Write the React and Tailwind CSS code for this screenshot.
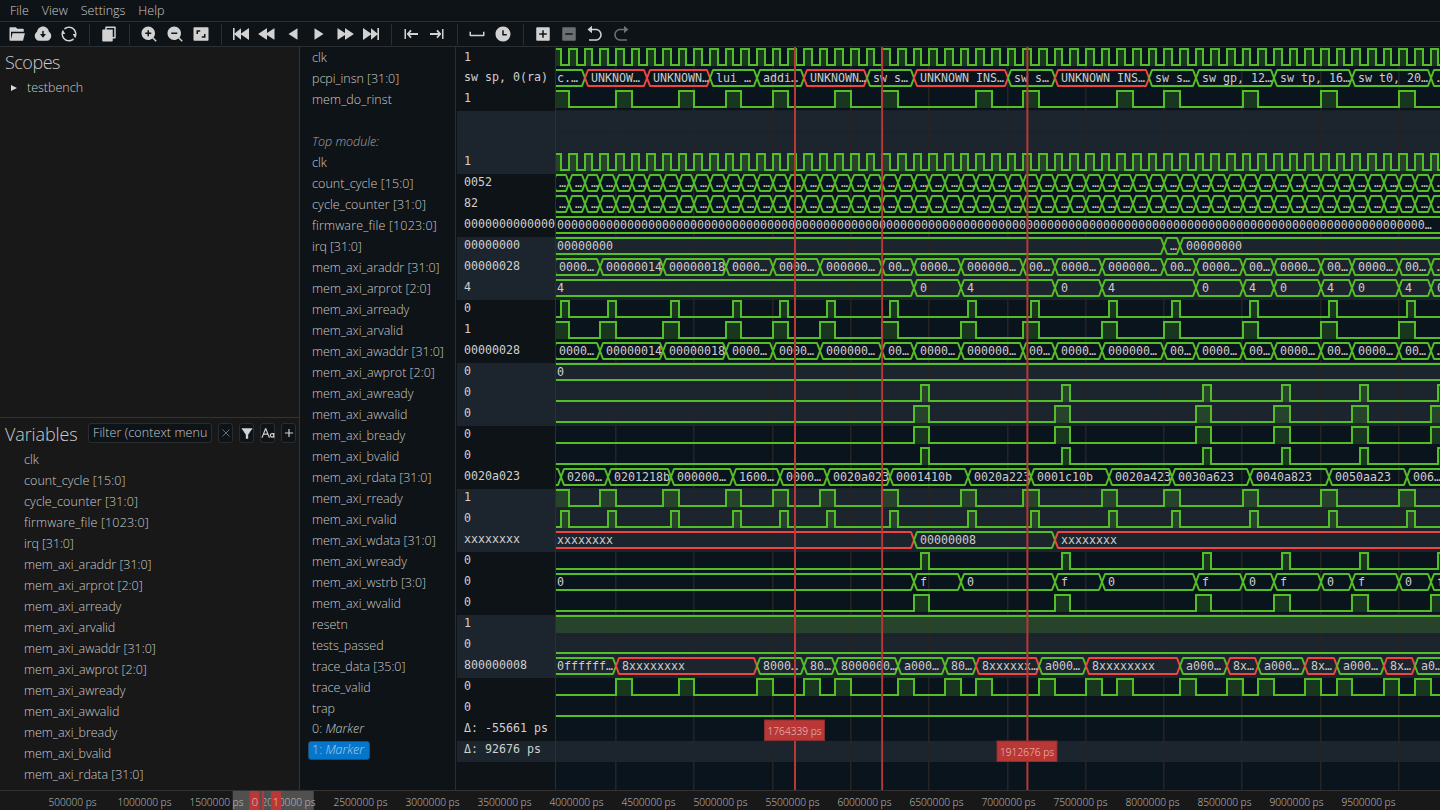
import React from "react";
import {
  RiFolderOpenFill, RiDownloadCloudFill, RiRefreshLine, RiFileCopyFill, RiZoomInFill, RiZoomOutFill,
  RiAspectRatioFill, RiTimeFill, RiAddBoxFill, RiCheckboxIndeterminateFill, RiArrowGoBackFill,
  RiArrowGoForwardFill, RiFilterFill, RiFontSize, RiAddFill, RiSpeedFill, RiRewindFill, RiSpace,
} from "react-icons/ri";

const ROW = 21;
const TOP = 48;
const LEFT = 556;
const RIGHT = 1440;
const GREEN = "#54be27";
const RED = "#f04540";

// clock cycle index -> horizontal position
const tx = (k) => Math.round(569 + 15.665 * k);

const spans = (starts, off = 0, len = 1) => starts.map((s) => [s + off, s + off + len]);
const READS = [-1, 2, 6, 10, 13, 16, 20, 25, 29, 34, 38, 43, 48, 53];
const WRITES = [22, 31, 40, 45, 50, 55];
const arValid = spans(READS);
const arReady = spans(READS, 0.5, 0.5);
const awValid = spans(WRITES);
const awReady = spans(WRITES, 0.5, 0.5);
const clock = Array.from({ length: 58 }, (_, i) => [i - 1, i - 0.5]);
const counter = Array.from({ length: 57 }, (_, i) => [i - 1, "…"]);
const addr = [
  [-1, "0000…"], [2, "00000014"], [6, "00000018"], [10, "0000…"], [13, "0000…"], [16, "000000…"], [20, "00…"],
  [22, "0000…"], [25, "000000…"], [29, "00…"], [31, "0000…"], [34, "000000…"], [38, "00…"], [40, "0000…"],
  [43, "00…"], [45, "0000…"], [48, "00…"], [50, "0000…"], [53, "00…"], [55, "…"],
];

const SIGNALS = [
  { name: "clk", value: "1", bits: clock },
  {
    name: "pcpi_insn [31:0]", value: "sw sp, 0(ra)",
    bus: [[-9, "c.…"], [1, "UNKNOW…", 1], [5, "UNKNOWN…", 1], [9, "lui …"], [12, "addi…"], [15, "UNKNOWN…", 1],
      [19, "sw s…"], [22, "UNKNOWN INS…", 1], [28, "sw s…"], [31, "UNKNOWN INS…", 1], [37, "sw s…"],
      [40, "sw gp, 12…"], [45, "sw tp, 16…"], [50, "sw t0, 20…"], [55, "…"]],
  },
  { name: "mem_do_rinst", value: "1", bits: spans([-1, 3, 7, 10, 13, 17, 20, 26, 29, 35, 38, 43, 48, 53]) },
  { name: "", value: "" },
  { name: "Top module:", value: "", italic: true },
  { name: "clk", value: "1", bits: clock },
  { name: "count_cycle [15:0]", value: "0052", bus: counter },
  { name: "cycle_counter [31:0]", value: "82", bus: counter },
  { name: "firmware_file [1023:0]", value: "0000000000000", bus: [[-9, "0".repeat(124) + "…"]] },
  { name: "irq [31:0]", value: "00000000", bus: [[-9, "00000000"], [38, "…"], [39, "00000000"]] },
  { name: "mem_axi_araddr [31:0]", value: "00000028", bus: addr },
  {
    name: "mem_axi_arprot [2:0]", value: "4",
    bus: [[-9, "4"], [22, "0"], [25, "4"], [31, "0"], [34, "4"], [40, "0"], [43, "4"], [45, "0"], [48, "4"], [50, "0"], [53, "4"], [55, "0"]],
  },
  { name: "mem_axi_arready", value: "0", bits: arReady },
  { name: "mem_axi_arvalid", value: "1", bits: arValid },
  { name: "mem_axi_awaddr [31:0]", value: "00000028", bus: addr },
  { name: "mem_axi_awprot [2:0]", value: "0", bus: [[-9, "0"]] },
  { name: "mem_axi_awready", value: "0", bits: awReady },
  { name: "mem_axi_awvalid", value: "0", bits: awValid },
  { name: "mem_axi_bready", value: "0", bits: awValid },
  { name: "mem_axi_bvalid", value: "0", bits: awReady },
  {
    name: "mem_axi_rdata [31:0]", value: "0020a023",
    bus: [[-9, ""], [-0.5, "0200…"], [2.5, "0201218b"], [6.5, "000000…"], [10.5, "1600…"], [13.5, "0000…"],
      [16.5, "0020a023"], [20.5, "0001410b"], [25.5, "0020a223"], [29.5, "0001c10b"], [34.5, "0020a423"],
      [38.5, "0030a623"], [43.5, "0040a823"], [48.5, "0050aa23"], [53.5, "006…"]],
  },
  { name: "mem_axi_rready", value: "1", bits: arValid },
  { name: "mem_axi_rvalid", value: "0", bits: arReady },
  { name: "mem_axi_wdata [31:0]", value: "xxxxxxxx", bus: [[-9, "xxxxxxxx", 1], [22, "00000008"], [31, "xxxxxxxx", 1]] },
  { name: "mem_axi_wready", value: "0", bits: awReady },
  {
    name: "mem_axi_wstrb [3:0]", value: "0",
    bus: [[-9, "0"], [22, "f"], [25, "0"], [31, "f"], [34, "0"], [40, "f"], [43, "0"], [45, "f"], [48, "0"], [50, "f"], [53, "0"], [55, "f"]],
  },
  { name: "mem_axi_wvalid", value: "0", bits: awValid },
  { name: "resetn", value: "1", bits: [[-9, 99]] },
  { name: "tests_passed", value: "0", bits: [] },
  {
    name: "trace_data [35:0]", value: "800000008",
    bus: [[-9, "0ffffff…"], [3, "8xxxxxxxx", 1], [12, "8000…"], [15, "80…"], [17, "8000000…"], [21, "a000…"],
      [24, "80…"], [26, "8xxxxxx…", 1], [30, "a000…"], [33, "8xxxxxxxx", 1], [39, "a000…"], [42, "8x…", 1],
      [44, "a000…"], [47, "8x…", 1], [49, "a000…"], [52, "8x…", 1], [54, "a0…"]],
  },
  { name: "trace_valid", value: "0", bits: spans([3, 7, 12, 15, 17, 21, 24, 26, 30, 33, 35, 39, 42, 44, 47, 49, 52, 54]) },
  { name: "trap", value: "0", bits: [] },
];

// names whose letters sit wider apart than the default
const TRACKING = {
  "firmware_file [1023:0]": "tracking-[0.17px]",
  "count_cycle [15:0]": "tracking-[0.07px]",
  "cycle_counter [31:0]": "tracking-[0.1px]",
  "mem_do_rinst": "tracking-[0.07px]",
  "irq [31:0]": "tracking-[-0.1px]",
  "mem_axi_arprot [2:0]": "tracking-[0px]",
  "mem_axi_awprot [2:0]": "tracking-[0px]",
};
const trackingOf = (name) => TRACKING[name] || "tracking-[-0.04px]";

const banded = (i) => Math.floor(i / 3) % 2 === 1;

const MONO = "font-['DejaVu_Sans_Mono',monospace]";

function Bits({ y, data }) {
  let d = `M${LEFT - 4} ${y + 17}`;
  data.forEach(([a, b]) => {
    const x1 = Math.max(tx(a), LEFT - 3);
    const x2 = Math.min(tx(b), RIGHT + 4);
    d += `H${x1}V${y + 1}H${x2}V${y + 17}`;
  });
  d += `H${RIGHT + 5}`;
  const always = data.length === 1 && data[0][0] === -9;
  return (
    <g>
      {data.map(([a, b], i) => {
        const x1 = Math.max(tx(a), LEFT);
        const x2 = Math.min(tx(b), RIGHT);
        return x2 > x1 ? <rect key={i} x={x1} y={y + 2} width={x2 - x1} height={16} fill={GREEN} opacity="0.2" /> : null;
      })}
      <path d={always ? `M${LEFT} ${y + 1}H${RIGHT}` : d} fill="none" stroke={GREEN} strokeWidth="2" />
    </g>
  );
}

function Bus({ y, data }) {
  return (
    <g>
      {data.map(([k, , red], i) => {
        const a = Math.max(tx(k), LEFT - 8);
        const b = i + 1 < data.length ? tx(data[i + 1][0]) : RIGHT + 12;
        return (
          <path
            key={i}
            d={`M${a} ${y + 9}L${a + 3} ${y + 1}H${b - 3}L${b} ${y + 9}L${b - 3} ${y + 17}H${a + 3}Z`}
            fill="none"
            stroke={red ? RED : GREEN}
            strokeWidth="2"
            strokeLinejoin="bevel"
          />
        );
      })}
      {data.map(([k, label], i) => (
        <text
          key={i}
          x={k === -9 ? LEFT + 1 : tx(k) + 6}
          y={y + 13}
          fill="#cdcdcd"
          className={MONO + " text-[11.63px] whitespace-pre"}
        >
          {label}
        </text>
      ))}
    </g>
  );
}

function Waves() {
  const grid = Array.from({ length: 11 }, (_, i) => 616 + 78.3 * i);
  return (
    <svg className="block h-[743px] w-[884px] shrink-0" viewBox="556 47 884 743">
      <rect x="556" y="47" width="884" height="743" fill="#0a141c" />
      {SIGNALS.map((_, i) => banded(i) && (
        <rect key={i} x="556" y={TOP + ROW * i} width="884" height={ROW} fill="#1c252d" />
      ))}
      <rect x="556" y={TOP + ROW * 33} width="884" height={ROW} fill="#1c252d" />
      {SIGNALS.map((_, i) => banded(i) && (
        <rect key={i} x="556" y={TOP + ROW * i - 1} width="884" height="1" fill="#182129" />
      ))}
      {grid.map((x) => <rect key={x} x={Math.round(x) - 1} y="47" width="1.6" height="743" fill="#252423" />)}
      {SIGNALS.map((s, i) => {
        const y = TOP + ROW * i;
        if (s.bits) return <Bits key={i} y={y} data={s.bits} />;
        if (s.bus) return <Bus key={i} y={y} data={s.bus} />;
        return null;
      })}
      <g fill="#b93835">
        <rect x="794" y="47" width="2" height="743" />
        <rect x="881.2" y="47" width="1.9" height="743" />
        <rect x="1026.4" y="47" width="2" height="743" />
      </g>
      {[[764, 719.5, "1764339 ps"], [996.5, 740.5, "1912676 ps"]].map(([x, y, t]) => (
        <g key={t}>
          <rect x={x + 0.5} y={y + 0.5} width="60" height="20.5" fill="#b93835" stroke="#8c2f30" />
          <text x={x + 3.5} y={y + 15} fill="#ecc8c6" textLength="54" lengthAdjust="spacingAndGlyphs"
            className="font-['Open_Sans',sans-serif] text-[11px]">{t}</text>
        </g>
      ))}
    </svg>
  );
}

function Names() {
  return (
    <div className="flex w-[156px] shrink-0 flex-col border-r border-[#2b2f32] bg-[#0e1317] pl-3">
      {SIGNALS.map((s, i) => (
        <div key={i} className={"h-[21px] shrink-0 leading-[21px] whitespace-nowrap " + trackingOf(s.name) + (s.italic ? " italic text-[#a6a6a6]" : "")}>
          {s.name}
        </div>
      ))}
      <div className="h-[21px] shrink-0 leading-[19px]">0: <i>Marker</i></div>
      <div className="-ml-[4px] mt-px h-[19px] w-[62px] shrink-0 rounded-[3px] border border-[#1d4f75] bg-[#0676cb] pl-[3px] leading-[15px] text-[#a9d0ee]">
        1: <i>Marker</i>
      </div>
    </div>
  );
}

function Values() {
  const items = [...SIGNALS.map((s) => s.value), "Δ: -55661 ps", "Δ: 92676 ps"];
  return (
    <div className={"flex w-[100px] shrink-0 flex-col overflow-hidden border-r border-[#2b2f32] bg-[#0e1317] pt-px pl-px text-[11.63px] text-[#d0d0d0] " + MONO}>
      {items.map((v, i) => (
        <div key={i} className={"h-[21px] shrink-0 pl-[7px] whitespace-pre " + (i ? "leading-[17px]" : "leading-[19px]") + ((i < 32 ? banded(i) : i === 33) ? " bg-[#1c252d]" : "")}>
          {v}
        </div>
      ))}
    </div>
  );
}

function Svg({ children }) {
  return <svg viewBox="0 0 18 18" className="size-[18px]" fill="currentColor">{children}</svg>;
}

const SkipBack = () => <Svg><path d="M1 3h1.6v5.6L9 3.2v5.4L17 3v12L9 9.400V14.800L2.600 9.400V15H1z" /></Svg>;
const SkipFwd = () => <Svg><path d="M17 3h-1.600v5.600L9 3.200v5.400L1 3v12L9 9.400V14.800L15.400 9.400V15H17z" /></Svg>;
const PlayRev = () => <Svg><path d="M13.500 3.200v11.600L4.500 9z" /></Svg>;
const Play = () => <Svg><path d="M4.500 3.200v11.600L13.500 9z" /></Svg>;
const Prev = () => (
  <Svg><path d="M2.500 4h1.500v10H2.500zM8.400 4.800l1.300 1.300L7.800 8.100H16v1.800H7.800l1.900 2L8.400 13.200 4.600 9z" /></Svg>
);
const Next = () => (
  <Svg><path d="M15.500 4h-1.500v10h1.500zM9.600 4.800 8.300 6.100l1.900 2H2v1.800h8.200l-1.900 2L9.600 13.200l3.800-4.200z" /></Svg>
);

const TOOLS = [
  RiFolderOpenFill, RiDownloadCloudFill, RiRefreshLine, null, RiFileCopyFill, null, RiZoomInFill, RiZoomOutFill,
  RiAspectRatioFill, null, SkipBack, RiRewindFill, PlayRev, Play, RiSpeedFill, SkipFwd, null, Prev, Next, null,
  RiSpace, RiTimeFill, null, RiAddBoxFill, [RiCheckboxIndeterminateFill], RiArrowGoBackFill, [RiArrowGoForwardFill],
];

function Toolbar() {
  return (
    <div className="flex h-[25px] shrink-0 items-center gap-2 border-b border-[#2b2f32] pl-2 text-[#d2d2d2]">
      {TOOLS.map((t, i) => {
        if (!t) return <div key={i} className="mx-[2.5px] h-[21px] w-px shrink-0 bg-[#2b2f32]" />;
        const off = Array.isArray(t);
        const Icon = off ? t[0] : t;
        return <span key={i} className={off ? "text-[#6d7072]" : ""}><Icon size={18} className="block size-[18px]" /></span>;
      })}
    </div>
  );
}

const VARIABLES = [
  "clk", "count_cycle [15:0]", "cycle_counter [31:0]", "firmware_file [1023:0]", "irq [31:0]", "mem_axi_araddr [31:0]",
  "mem_axi_arprot [2:0]", "mem_axi_arready", "mem_axi_arvalid", "mem_axi_awaddr [31:0]", "mem_axi_awprot [2:0]",
  "mem_axi_awready", "mem_axi_awvalid", "mem_axi_bready", "mem_axi_bvalid", "mem_axi_rdata [31:0]",
];

function SmallButton({ children }) {
  return (
    <div className="flex h-[20px] w-[15px] shrink-0 items-center justify-center rounded-[3px] border border-[#2a2d2f] bg-[#0e1317] text-[#d2d2d2]">
      {children}
    </div>
  );
}

function Sidebar() {
  return (
    <div className="flex w-[300px] shrink-0 flex-col border-r border-[#333333] bg-[#181818]">
      <div className="h-[371px] shrink-0 border-b border-[#333333]">
        <div className="pl-[5px] pt-[3px] text-[18px] leading-6 tracking-[-0.5px] text-[#cbcbcb]">Scopes</div>
        <div className="mt-[3px] flex items-center pl-[11px] leading-[21px]">
          <svg viewBox="0 0 6 6" className="mr-[10px] size-[6px]" fill="#d8d8d8"><path d="M0 0L6 3L0 6z" /></svg>
          testbench
        </div>
      </div>
      <div className="flex h-[31px] shrink-0 items-center pb-px pl-[5px]">
        <div className="w-[83px] pt-[3px] text-[18px] tracking-[-0.12px] text-[#cbcbcb]">Variables</div>
        <div className="mr-[6px] h-[20px] w-[124px] overflow-hidden rounded-[3px] border border-[#2a2d2f] bg-[#0e1317] pl-[4px] leading-[18px] tracking-[0.1px] whitespace-nowrap text-[#c8c8c8]">
          Filter (context menu
        </div>
        <div className="flex gap-[6px]">
          <SmallButton>
            <svg viewBox="0 0 8 8" className="size-[8px] shrink-0" stroke="#6d7072" strokeWidth="1"><path d="M0.500 0.500L7.500 7.500M7.500 0.500L0.500 7.500" /></svg>
          </SmallButton>
          <SmallButton><RiFilterFill size={14} className="shrink-0" /></SmallButton>
          <SmallButton><RiFontSize size={14} className="shrink-0" /></SmallButton>
          <SmallButton><RiAddFill size={14} className="shrink-0" /></SmallButton>
        </div>
      </div>
      {VARIABLES.map((v) => (
        <div key={v} className={"h-[21px] shrink-0 pl-6 leading-[21px] whitespace-nowrap " + trackingOf(v)}>{v}</div>
      ))}
    </div>
  );
}

function Overview() {
  const ticks = Array.from({ length: 19 }, (_, i) => i + 1);
  return (
    <svg className="block h-[19px] w-[1440px] shrink-0" viewBox="0 791 1440 19">
      <rect x="0" y="791" width="1440" height="19" fill="#181818" />
      <rect x="232.700" y="791" width="81" height="19" fill="#505050" />
      <g className="font-['Open_Sans',sans-serif] text-[11px]" fill="#c4c4c4">
        {ticks.map((n) => (
          <text key={n} x={72 * n + 0.4 - (n === 1 ? 24 : 27)} y="806.300" textLength={n === 1 ? 48 : 54} lengthAdjust="spacingAndGlyphs">
            {n * 500000} ps
          </text>
        ))}
      </g>
      <g fill="#b93835">
        <rect x="249.400" y="791" width="10" height="19" />
        <rect x="262" y="791" width="2" height="19" />
        <rect x="271" y="791" width="10" height="19" />
      </g>
      <g className="font-['Open_Sans',sans-serif] text-[11px]" fill="#ecc8c6" textAnchor="middle">
        <text x="254.800" y="806.300">0</text>
        <text x="276" y="806.300">1</text>
      </g>
    </svg>
  );
}

export default function App() {
  return (
    <div className="flex h-[810px] w-[1440px] flex-col overflow-hidden bg-[#0e1317] font-['Open_Sans','Noto_Sans',sans-serif] text-[12.5px] font-light text-[#cacaca]">
      <div className="flex h-[22px] shrink-0 items-center gap-[13px] border-b border-[#2b2f32] pt-[2px] pl-[10px]">
        <span>File</span><span>View</span><span>Settings</span><span>Help</span>
      </div>
      <Toolbar />
      <div className="flex h-[743px] shrink-0">
        <Sidebar />
        <Names />
        <Values />
        <Waves />
      </div>
      <div className="h-px shrink-0 bg-[#333333]" />
      <Overview />
    </div>
  );
}
